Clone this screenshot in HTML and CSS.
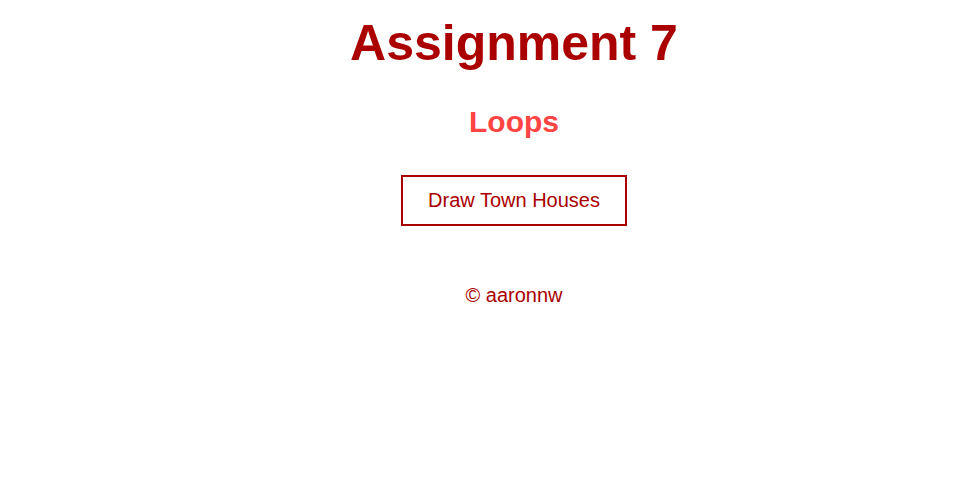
FILE: index.html
```html
<!DOCTYPE html>
<html>
<head>
<meta charset="utf-8">
<title>Assignment 7</title>
<link rel="stylesheet" href="styles.css">
</head>
<body>
<main class="page">
  <h1 class="title">Assignment 7</h1>
  <h2 class="subtitle">Loops</h2>
  <button class="draw-btn" type="button">Draw Town Houses</button>
  <footer class="footer">© aaronnw</footer>
</main>
</body>
</html>
```

FILE: styles.css
```css
html, body {
  margin: 0;
  padding: 0;
  background: #ffffff;
}

.page {
  display: flex;
  flex-direction: column;
  align-items: center;
  padding-left: 49px;
  font-family: "Liberation Sans", Arial, sans-serif;
}

.title {
  margin: 15px 0 0;
  font-size: 50px;
  line-height: 57px;
  font-weight: bold;
  color: #aa0000;
}

.subtitle {
  margin: 33px 0 0;
  font-size: 30px;
  line-height: 34px;
  font-weight: bold;
  color: #f44;
}

.draw-btn {
  margin-top: 36px;
  padding: 12px 25px;
  border: 2px solid #aa0000;
  background: #fff;
  color: #aa0000;
  font-family: "Liberation Sans", Arial, sans-serif;
  font-size: 20px;
  line-height: 23px;
  border-radius: 0;
}

.footer {
  margin-top: 58px;
  font-size: 20px;
  line-height: 23px;
  color: #aa0000;
}
```
